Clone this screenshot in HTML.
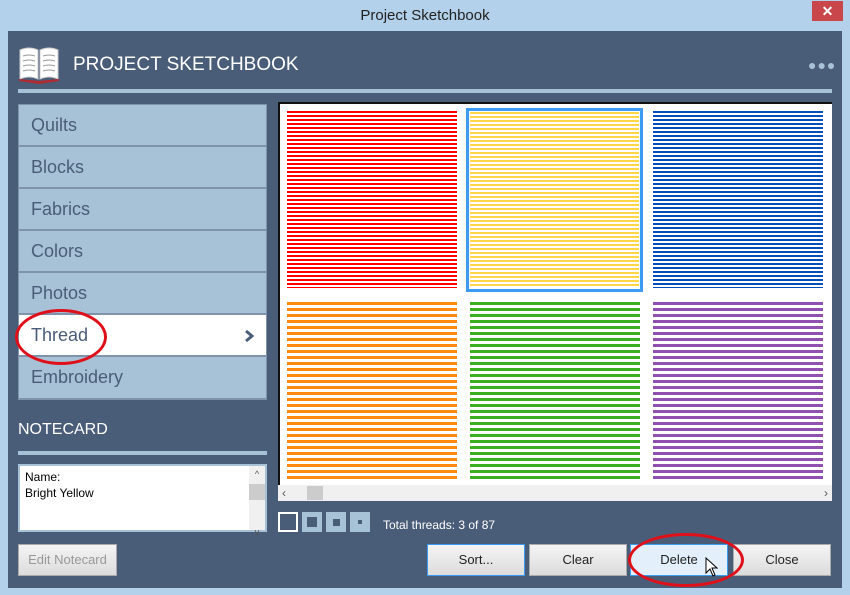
<!DOCTYPE html><html><head><style>
body{margin:0;width:850px;height:595px;background:#b3d1ea;position:relative;overflow:hidden;font-family:"Liberation Sans",sans-serif}
.a{position:absolute}
.item{position:absolute;left:19px;width:247px;height:41px;background:#a7c1d6;border-bottom:1px solid #7f93ab;color:#4a5d78;font-size:18px;line-height:41px;padding-left:12px;box-sizing:border-box}
.tile{position:absolute;width:170px;height:177px}
.btn{position:absolute;top:544px;height:32px;background:linear-gradient(#f4f4f4,#dcdcdc);border:1px solid #aaa;box-sizing:border-box;font-size:13px;text-align:center;line-height:30px;color:#222}
</style></head><body>
<div class="a" style="left:0;top:0;width:850px;height:31px;text-align:center;line-height:31px;font-size:15px;color:#222">Project Sketchbook</div>
<div class="a" style="left:812px;top:1px;width:31px;height:20px;background:#c9474a;color:#fff;text-align:center;line-height:20px;font-size:14px;font-weight:bold">✕</div>
<div class="a" style="left:8px;top:31px;width:834px;height:557px;background:#4a5d78"></div>
<svg class="a" style="left:18px;top:46px" width="42" height="38" viewBox="0 0 42 38"><path d="M2 4 Q11 0 20 4 V33 Q11 29 2 33Z M22 4 Q31 0 40 4 V33 Q31 29 22 33Z" fill="#fff" stroke="#ccc"/><path d="M1 33 L21 35 L41 33 L41 35 L21 38 L1 35Z" fill="#b02a30"/><g stroke="#999" stroke-width="1" fill="none"><path d="M5 10 Q11 8 17 10M5 15 Q11 13 17 15M5 20 Q11 18 17 20M5 25 Q11 23 17 25M25 10 Q31 8 37 10M25 15 Q31 13 37 15M25 20 Q31 18 37 20M25 25 Q31 23 37 25"/></g></svg>
<div class="a" style="left:73px;top:54px;color:#fff;font-size:19px">PROJECT SKETCHBOOK</div>
<div class="a" style="left:808px;top:57px;color:#a7c1d6;font-size:14px;letter-spacing:1px">●●●</div>
<div class="a" style="left:18px;top:89px;width:814px;height:4px;background:#a7c1d6"></div>
<div class="a" style="left:18px;top:104px;width:249px;height:296px;background:#7f93ab"></div>
<div class="item" style="top:105px">Quilts</div>
<div class="item" style="top:147px">Blocks</div>
<div class="item" style="top:189px">Fabrics</div>
<div class="item" style="top:231px">Colors</div>
<div class="item" style="top:273px">Photos</div>
<div class="item" style="top:315px;background:#fff">Thread<svg style="position:absolute;right:12px;top:15px" width="10" height="12"><path d="M2 1 L8 6 L2 11" stroke="#4a5d78" stroke-width="3" fill="none"/></svg></div>
<div class="item" style="top:357px;border:none">Embroidery</div>
<div class="a" style="left:15px;top:309px;width:86px;height:50px;border:3px solid #e0101a;border-radius:50%"></div>
<div class="a" style="left:18px;top:421px;color:#fff;font-size:16px">NOTECARD</div>
<div class="a" style="left:18px;top:451px;width:249px;height:4px;background:#a7c1d6"></div>
<div class="a" style="left:18px;top:464px;width:249px;height:68px;background:#fff;border:2px solid #a7c1d6;box-sizing:border-box;font-size:12px;padding:3px 5px;line-height:16px">Name:<br>Bright Yellow
<div class="a" style="right:0;top:0;width:16px;height:64px;background:#f0f0f0;font-size:9px;text-align:center;color:#555">^<div style="background:#ccc;height:16px;margin:2px 0"></div><div style="margin-top:24px">v</div></div></div>
<div class="a" style="left:278px;top:102px;width:554px;height:398px;background:#fff;border-top:2px solid #111;border-left:2px solid #111;box-sizing:border-box"></div>
<div class="tile" style="left:287px;top:111px;background:repeating-linear-gradient(#ff0000 0 2px,#fff 2px 4px)"></div>
<div class="a" style="left:466px;top:108px;width:177px;height:184px;border:3px solid #3a9bf0;box-sizing:border-box;background:#fff"></div>
<div class="tile" style="left:470px;top:112px;width:169px;height:176px;background:repeating-linear-gradient(#ffd54a 0 2px,#fff 2px 4px)"></div>
<div class="tile" style="left:653px;top:111px;background:repeating-linear-gradient(#0050b8 0 2px,#fff 2px 4px)"></div>
<div class="tile" style="left:287px;top:302px;background:repeating-linear-gradient(#ff8a10 0 3px,#fff 3px 6px)"></div>
<div class="tile" style="left:470px;top:302px;background:repeating-linear-gradient(#3ab020 0 3px,#fff 3px 6px)"></div>
<div class="tile" style="left:653px;top:302px;background:repeating-linear-gradient(#9050b0 0 3px,#fff 3px 6px)"></div>
<div class="a" style="left:278px;top:485px;width:554px;height:16px;background:#f0f0f0;font-size:12px;color:#555;line-height:16px"><span style="margin-left:4px">‹</span><span class="a" style="left:29px;top:1px;width:16px;height:14px;background:#ccc"></span><span class="a" style="right:4px">›</span></div>
<div class="a" style="left:278px;top:512px;width:20px;height:20px;border:2px solid #fff;box-sizing:border-box"></div>
<div class="a" style="left:302px;top:512px;width:20px;height:20px;background:#a7c1d6"><div style="margin:5px;width:10px;height:10px;background:#4a5d78"></div></div>
<div class="a" style="left:326px;top:512px;width:20px;height:20px;background:#a7c1d6"><div style="margin:7px;width:7px;height:7px;background:#4a5d78"></div></div>
<div class="a" style="left:350px;top:512px;width:20px;height:20px;background:#a7c1d6"><div style="margin:8px;width:4px;height:4px;background:#4a5d78"></div></div>
<div class="a" style="left:383px;top:518px;color:#fff;font-size:12px">Total threads: 3 of 87</div>
<div class="btn" style="left:18px;width:99px;color:#999">Edit Notecard</div>
<div class="btn" style="left:427px;width:98px;border:1px solid #3a9bf0">Sort...</div>
<div class="btn" style="left:529px;width:98px">Clear</div>
<div class="btn" style="left:630px;width:98px;background:#e3effa;border-color:#3a9bf0">Delete</div>
<div class="btn" style="left:733px;width:98px">Close</div>
<div class="a" style="left:628px;top:533px;width:110px;height:48px;border:3px solid #e0101a;border-radius:50%"></div>
<svg class="a" style="left:705px;top:557px" width="14" height="22"><path d="M1 1 L1 16 L5 12 L8 19 L10 18 L7 11 L12 11Z" fill="#fff" stroke="#000"/></svg>
</body></html>
